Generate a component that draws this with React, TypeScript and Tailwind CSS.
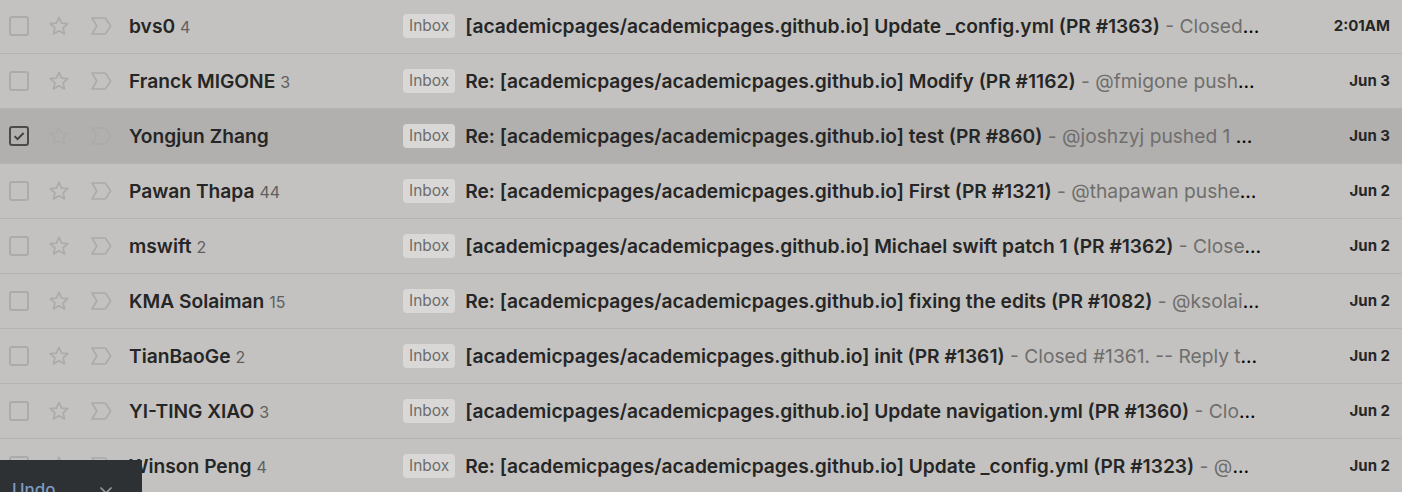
import { X } from "lucide-react";

type Mail = {
    sender: string;
    count?: number;
    subject: string;
    snippet: string;
    date: string;
    selected?: boolean;
};

const mails: Mail[] = [
    { sender: "bvs0", count: 4, subject: "[academicpages/academicpages.github.io] Update _config.yml (PR #1363)", snippet: "Closed #1363. -- Reply to this email directly", date: "2:01AM" },
    { sender: "Franck MIGONE", count: 3, subject: "Re: [academicpages/academicpages.github.io] Modify (PR #1162)", snippet: "@fmigone pushed 1 commit.", date: "Jun 3" },
    { sender: "Yongjun Zhang", subject: "Re: [academicpages/academicpages.github.io] test (PR #860)", snippet: "@joshzyj pushed 1 commit.", date: "Jun 3", selected: true },
    { sender: "Pawan Thapa", count: 44, subject: "Re: [academicpages/academicpages.github.io] First (PR #1321)", snippet: "@thapawan pushed 1 commit.", date: "Jun 2" },
    { sender: "mswift", count: 2, subject: "[academicpages/academicpages.github.io] Michael swift patch 1 (PR #1362)", snippet: "Closed #1362. -- Reply to this email", date: "Jun 2" },
    { sender: "KMA Solaiman", count: 15, subject: "Re: [academicpages/academicpages.github.io] fixing the edits (PR #1082)", snippet: "@ksolaiman pushed 1 commit.", date: "Jun 2" },
    { sender: "TianBaoGe", count: 2, subject: "[academicpages/academicpages.github.io] init (PR #1361)", snippet: "Closed #1361. -- Reply to this email directly, view it on GitHub", date: "Jun 2" },
    { sender: "YI-TING XIAO", count: 3, subject: "[academicpages/academicpages.github.io] Update navigation.yml (PR #1360)", snippet: "Closed #1360. -- Reply", date: "Jun 2" },
    { sender: "Winson Peng", count: 4, subject: "Re: [academicpages/academicpages.github.io] Update _config.yml (PR #1323)", snippet: "@winson pushed 1 commit.", date: "Jun 2" },
];

const Checkbox = ({ checked }: { checked?: boolean }) => (
    <svg width="24" height="24" viewBox="0 0 24 24">
        <rect x="3" y="3" width="18" height="18" rx="2" fill="none"
            stroke={checked ? "#4b4b4a" : "#acabaa"} strokeWidth="2" />
        {checked && (
            <path d="M7.6 12.2l2.9 2.9L16.6 9" fill="none" stroke="#3f3f3e" strokeWidth="1.9" />
        )}
    </svg>
);

const Star = () => (
    <svg width="24" height="24" viewBox="0 0 24 24">
        <path d="M12 3.4l2.6 5.7 6.2.6-4.7 4.2 1.4 6.1L12 16.8 6.5 20l1.4-6.1-4.7-4.2 6.2-.6z"
            fill="none" stroke="#acabaa" strokeWidth="1.7" strokeLinejoin="round" />
    </svg>
);

const Important = () => (
    <svg width="24" height="24" viewBox="0 0 24 24">
        <path d="M3 4h12.4c.6 0 1.1.3 1.5.75L21.6 12l-4.7 7.25c-.4.45-.9.75-1.5.75H3l4.8-8z"
            fill="none" stroke="#acabaa" strokeWidth="1.7" strokeLinejoin="round" />
    </svg>
);

const Row = ({ mail, first }: { mail: Mail; first: boolean }) => (
    <div className={`flex items-center h-[55px] border-b border-[#b4b3b2] ${mail.selected ? "bg-[#b1b0af]" : "bg-[#c3c2c0]"} ${first ? "mt-[-1px]" : ""}`}>
        <div className="w-[37px] flex justify-center shrink-0 pl-[1px]">
            <Checkbox checked={mail.selected} />
        </div>
        <div className="w-[44px] flex justify-center shrink-0">
            <Star />
        </div>
        <div className="w-[40px] flex justify-center shrink-0">
            <Important />
        </div>
        <div className="w-[282px] pl-[8px] pr-[8px] shrink-0 truncate text-[19.2px] text-[#262626] font-semibold">
            {mail.sender}
            {mail.count !== undefined && (
                <span className="ml-[5px] text-[16px] font-normal text-[#5f5f5e]">{mail.count}</span>
            )}
        </div>
        <div className="w-[859px] shrink-0 flex items-center">
            <span className="shrink-0 px-[6px] h-[24px] leading-[24px] rounded-[4px] bg-[#d9d8d7] text-[15.5px] text-[#6d6c6b] mr-[10px]">
                Inbox
            </span>
            <div className="truncate text-[19.2px] min-w-0 flex-1">
                <span className="font-semibold text-[#262626]">{mail.subject}</span>
                <span className="text-[#6f6e6d]"> - {mail.snippet}</span>
            </div>
        </div>
        <div className="flex-1 shrink-0 text-right pr-[12px] text-[15px] font-bold text-[#262626]">
            {mail.date}
        </div>
    </div>
);

export default function App() {
    return (
        <div className="relative w-[1402px] h-[492px] overflow-hidden bg-[#c3c2c0]" style={{ fontFamily: "Inter, Roboto, sans-serif" }}>
            {mails.map((m, i) => (
                <Row key={m.sender} mail={m} first={i === 0} />
            ))}
            <div className="absolute left-0 top-[460px] w-[142px] h-[60px] bg-[#2d3133] flex items-start justify-between pl-[12px] pr-[26px] pt-[22px]">
                <span className="text-[17px] text-[#7f9bc4] font-medium leading-none">Undo</span>
                <X size={20} color="#9a9c9d" strokeWidth={2} className="mt-[1px]" />
            </div>
        </div>
    );
}
